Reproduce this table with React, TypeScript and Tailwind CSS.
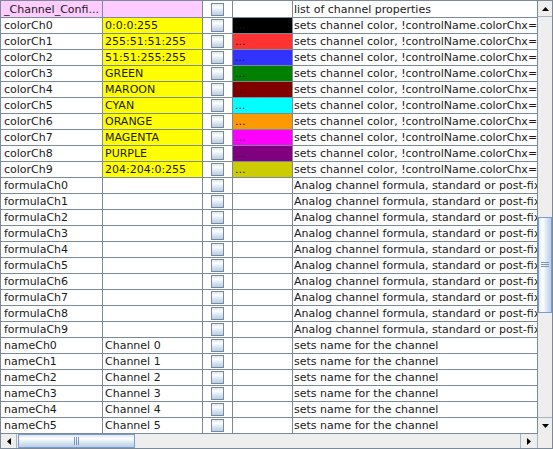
import React from 'react';

type Row = {
  name: string;
  value: string;
  desc: string;
  swatch?: string;
  kind: 'head' | 'color' | 'plain';
};

const colors: [string, string][] = [
  ['0:0:0:255', '#000000'],
  ['255:51:51:255', '#ff3333'],
  ['51:51:255:255', '#3333ff'],
  ['GREEN', '#008000'],
  ['MAROON', '#800000'],
  ['CYAN', '#00ffff'],
  ['ORANGE', '#ff9900'],
  ['MAGENTA', '#ff00ff'],
  ['PURPLE', '#800080'],
  ['204:204:0:255', '#cccc00'],
];

const rows: Row[] = [
  { name: '_Channel_Confi...', value: '', desc: 'list of channel properties', kind: 'head' },
  ...colors.map(([value, swatch], i) => ({
    name: `colorCh${i}`,
    value,
    swatch,
    desc: 'sets channel color, !controlName.colorChx=colorname or r:g:b:a',
    kind: 'color' as const,
  })),
  ...Array.from({ length: 10 }, (_, i) => ({
    name: `formulaCh${i}`,
    value: '',
    desc: 'Analog channel formula, standard or post-fix notation',
    kind: 'plain' as const,
  })),
  ...Array.from({ length: 6 }, (_, i) => ({
    name: `nameCh${i}`,
    value: `Channel ${i}`,
    desc: 'sets name for the channel',
    kind: 'plain' as const,
  })),
];

function CheckBox() {
  return (
    <div className="h-[13px] w-[13px] border border-[#7a8a99] bg-[linear-gradient(to_bottom,#dde8f3_0%,#ffffff_30%,#dde8f3_60%,#b8cfe5_100%)]" />
  );
}

function TableRow({ row, first }: { row: Row; first: boolean }) {
  const h = first ? 'h-[17px]' : 'h-[16px]';
  const nameBg = row.kind === 'head' ? 'bg-[#ffccff]' : 'bg-white';
  const valueBg =
    row.kind === 'head' ? 'bg-[#ffccff]' : row.kind === 'color' ? 'bg-[#ffff00]' : 'bg-white';
  return (
    <div className={`flex ${h} border-b border-[#7a8a99] leading-[15px]`}>
      <div className={`w-[102px] shrink-0 border-r border-[#7a8a99] pl-[3px] flex items-center overflow-hidden whitespace-nowrap ${nameBg}`}>
        {row.name}
      </div>
      <div className={`w-[100px] shrink-0 border-r border-[#7a8a99] pl-[2px] flex items-center overflow-hidden whitespace-nowrap ${valueBg}`}>
        {row.value}
      </div>
      <div className="w-[30px] shrink-0 border-r border-[#7a8a99] flex items-center justify-center bg-white">
        <CheckBox />
      </div>
      <div
        className="w-[60px] shrink-0 border-r border-[#7a8a99] pl-[2px] flex items-center overflow-hidden whitespace-nowrap bg-white"
        style={row.swatch ? { backgroundColor: row.swatch } : undefined}
      >
        {row.swatch ? '...' : ''}
      </div>
      <div className="flex-1 min-w-0 pl-[1px] flex items-center overflow-hidden whitespace-nowrap bg-white">
        {row.desc}
      </div>
    </div>
  );
}

function Arrow({ dir }: { dir: 'up' | 'down' | 'left' | 'right' }) {
  const pts = {
    up: '0,4 7,4 3.5,0',
    down: '0,0 7,0 3.5,4',
    left: '4,0 4,7 0,3.5',
    right: '0,0 0,7 4,3.5',
  }[dir];
  const vert = dir === 'up' || dir === 'down';
  return (
    <svg width={vert ? 7 : 4} height={vert ? 4 : 7} viewBox={vert ? '0 0 7 4' : '0 0 4 7'}>
      <polygon points={pts} fill="#000" />
    </svg>
  );
}

function VScroll() {
  return (
    <div className="w-[15px] shrink-0 flex flex-col border-l border-[#7a8a99] bg-[#eeeeee]">
      <div className="h-[16px] shrink-0 flex items-center justify-center border-b border-[#a8b4c2]">
        <Arrow dir="up" />
      </div>
      <div className="flex-1 flex flex-col">
        <div className="mt-[200px] h-[96px] border border-[#7b9ad0] bg-[linear-gradient(to_right,#dde8f3_0%,#ffffff_30%,#dde8f3_60%,#b8cfe5_100%)] flex items-center justify-center">
          <svg width="8" height="6" viewBox="0 0 8 6">
            <rect x="0" y="0" width="8" height="1" fill="#7d95bd" />
            <rect x="0" y="2" width="8" height="1" fill="#7d95bd" />
            <rect x="0" y="4" width="8" height="1" fill="#7d95bd" />
          </svg>
        </div>
      </div>
      <div className="h-[17px] shrink-0 flex items-center justify-center border-t border-[#a8b4c2]">
        <Arrow dir="down" />
      </div>
    </div>
  );
}

function HScroll() {
  return (
    <div className="flex h-[14px] shrink-0">
      <div className="flex-1 flex bg-[#eeeeee]">
        <div className="w-[16px] shrink-0 flex items-center justify-center border-r border-[#a8b4c2]">
          <Arrow dir="left" />
        </div>
        <div className="flex-1 flex">
          <div className="ml-[1px] w-[117px] border border-[#7b9ad0] bg-[linear-gradient(to_bottom,#dde8f3_0%,#ffffff_30%,#dde8f3_60%,#b8cfe5_100%)] flex items-center justify-center">
            <svg width="6" height="8" viewBox="0 0 6 8">
              <rect x="0" y="0" width="1" height="8" fill="#7d95bd" />
              <rect x="2" y="0" width="1" height="8" fill="#7d95bd" />
              <rect x="4" y="0" width="1" height="8" fill="#7d95bd" />
            </svg>
          </div>
        </div>
        <div className="w-[17px] shrink-0 flex items-center justify-center border-l border-[#a8b4c2]">
          <Arrow dir="right" />
        </div>
      </div>
      <div className="w-[15px] shrink-0 border-l border-[#a8b4c2] bg-[#eeeeee]" />
    </div>
  );
}

export default function App() {
  return (
    <div className="w-[553px] h-[449px] border border-[#7a8a99] bg-white flex flex-col font-['DejaVu_Sans',sans-serif] text-[11px] text-[#1a1a1a]">
      <div className="flex shrink-0">
        <div className="flex-1 min-w-0 overflow-hidden">
          {rows.map((row, i) => (
            <TableRow key={row.name} row={row} first={i === 0} />
          ))}
        </div>
        <VScroll />
      </div>
      <HScroll />
    </div>
  );
}
